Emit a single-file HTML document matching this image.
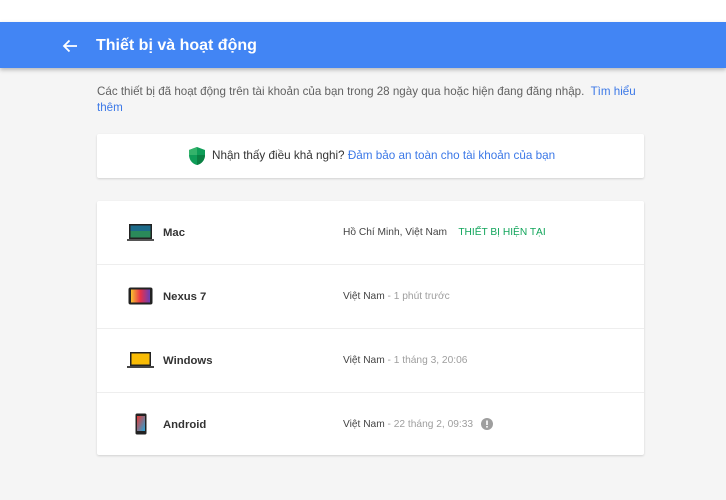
<!DOCTYPE html>
<html><head><meta charset="utf-8"><style>
*{margin:0;padding:0;box-sizing:border-box}
body{width:726px;height:500px;background:#f5f5f5;font-family:"Liberation Sans",Roboto,sans-serif;position:relative;overflow:hidden}
.top{position:absolute;left:0;top:0;width:726px;height:22px;background:#fff}
.bar{position:absolute;left:0;top:22px;width:726px;height:46px;background:#4285f4;box-shadow:0 2px 4px rgba(0,0,0,.25)}
.bar .t{position:absolute;left:96px;top:15px;color:#fff;font-size:16px;font-weight:bold}
.bar svg{position:absolute;left:62px;top:17px}
.desc{position:absolute;left:97px;top:84px;width:560px;font-size:11.6px;line-height:16px;color:#616161}
a{color:#3b78e7;text-decoration:none}
.card{position:absolute;left:97px;width:547px;background:#fff;border-radius:2px;box-shadow:0 1px 2px rgba(0,0,0,.15)}
.c1{top:134px;height:44px;font-size:11.7px;color:#333}
.c1 .in{position:absolute;left:90px;top:15px;white-space:nowrap}
.c1 svg{position:absolute;left:91px;top:12px}
.c2{top:201px;height:254px}
.row{position:absolute;left:0;width:547px;height:64px;border-bottom:1px solid #eee}
.row .n{position:absolute;left:66px;top:26px;font-size:11.3px;font-weight:bold;color:#333}
.row .l{position:absolute;left:246px;top:26px;font-size:10.2px;color:#444;white-space:nowrap}
.row .l span{color:#9e9e9e}
.row .l span.g{color:#12a55b}
.ico{position:absolute}
</style></head><body>
<div class="top"></div>
<div class="bar"><svg width="16" height="14" viewBox="0 0 16 14"><path d="M15 7H2M7.5 1.5L2 7l5.5 5.5" stroke="#fff" stroke-width="1.8" fill="none"/></svg><div class="t">Thiết bị và hoạt động</div></div>
<div class="desc">Các thiết bị đã hoạt động trên tài khoản của bạn trong 28 ngày qua hoặc hiện đang đăng nhập.&nbsp; <a>Tìm hiểu thêm</a></div>
<div class="card c1"><svg width="18" height="20" viewBox="0 0 18 20"><path d="M9 1L1 4v5c0 5 3.5 9 8 10 4.5-1 8-5 8-10V4z" fill="#0f9d58"/><path d="M9 1L1 4v5h8z" fill="#34b36b"/><path d="M9 9h8c0 5-3.5 9-8 10z" fill="#0b8043"/></svg><div class="in" style="left:115px">Nhận thấy điều khả nghi? <a>Đảm bảo an toàn cho tài khoản của bạn</a></div></div>
<div class="card c2">
<div class="row" style="top:0">
<svg class="ico" style="left:30px;top:22px" width="27" height="19" viewBox="0 0 27 19"><rect x="2" y="1" width="23" height="15" fill="#222"/><rect x="3.5" y="2.5" width="20" height="12" fill="#1c6b8a"/><rect x="3.5" y="8" width="20" height="6.5" fill="#2a8a5a"/><rect x="0" y="16" width="27" height="2" fill="#555"/></svg>
<div class="n">Mac</div><div class="l">Hồ Chí Minh, Việt Nam &nbsp;&nbsp;&nbsp;<span class="g">THIẾT BỊ HIỆN TẠI</span></div></div>
<div class="row" style="top:64px">
<svg class="ico" style="left:31px;top:22px" width="25" height="18" viewBox="0 0 25 18"><defs><linearGradient id="a" x1="0" x2="1"><stop offset="0" stop-color="#f9c22e"/><stop offset=".5" stop-color="#e8304a"/><stop offset="1" stop-color="#6a3fb5"/></linearGradient></defs><rect x="0.5" y="0.5" width="24" height="17" rx="2" fill="#222"/><rect x="3" y="2.5" width="19" height="13" fill="url(#a)"/></svg>
<div class="n">Nexus 7</div><div class="l">Việt Nam <span>- 1 phút trước</span></div></div>
<div class="row" style="top:128px">
<svg class="ico" style="left:30px;top:22px" width="27" height="18" viewBox="0 0 27 18"><rect x="3" y="1" width="21" height="14" fill="#222"/><rect x="4.5" y="2.5" width="18" height="11" fill="#f9bc05"/><rect x="0" y="15" width="27" height="2" fill="#444"/></svg>
<div class="n">Windows</div><div class="l">Việt Nam <span>- 1 tháng 3, 20:06</span></div></div>
<div class="row" style="top:192px;border:none">
<svg class="ico" style="left:38px;top:20px" width="12" height="22" viewBox="0 0 12 22"><rect x="0.5" y="0.5" width="11" height="21" rx="1.5" fill="#222"/><defs><linearGradient id="b" x1="0" x2="1" y1="0" y2="1"><stop offset="0" stop-color="#e53935"/><stop offset="1" stop-color="#26a6d9"/></linearGradient></defs><rect x="2" y="3" width="8" height="15" fill="url(#b)"/></svg>
<div class="n">Android</div><div class="l">Việt Nam <span>- 22 tháng 2, 09:33</span></div>
<svg class="ico" style="left:384px;top:25px" width="12" height="12" viewBox="0 0 12 12"><circle cx="6" cy="6" r="6" fill="#9e9e9e"/><rect x="5.2" y="2.5" width="1.6" height="4.5" fill="#fff"/><rect x="5.2" y="8" width="1.6" height="1.6" fill="#fff"/></svg>
</div>
</div>
</body></html>
